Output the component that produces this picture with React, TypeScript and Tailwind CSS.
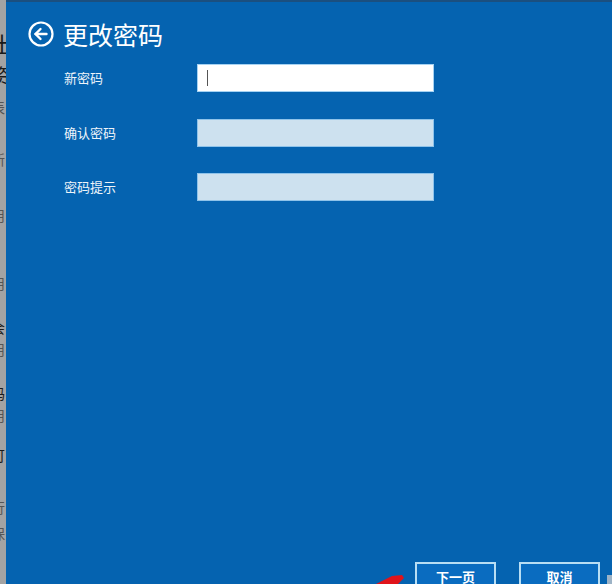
const cjk = { fontFamily: '"Noto Sans CJK SC", "Noto Sans", sans-serif' };

function BackIcon() {
  return (
    <svg width="28" height="28" viewBox="0 0 28 28" fill="none" stroke="white" strokeLinecap="round" strokeLinejoin="round">
      <circle cx="14" cy="14" r="11.5" strokeWidth="2.2" />
      <path d="M8.5 14H19.5" strokeWidth="2.4" />
      <path d="M13.5 9L8.5 14L13.5 19" strokeWidth="2.4" />
    </svg>
  );
}

const fields = [
  { label: '新密码', active: true },
  { label: '确认密码', active: false },
  { label: '密码提示', active: false },
];

export default function App() {
  return (
    <div className="relative flex h-[584px] w-[612px] overflow-hidden bg-[#a3a3a3]" style={cjk}>
      {/* window behind, mostly covered */}
      <div className="w-[6px] shrink-0 overflow-hidden">
        <div className="ml-[-9px] flex w-[20px] flex-col text-[#1a1a1a]">
          <span className="mt-[30px] text-[22px] leading-[26px]">士</span>
          <span className="mt-[8px] text-[20px] leading-[24px]">资</span>
          <span className="mt-[10px] text-[14px] leading-[18px] text-[#555]">表</span>
          <span className="mt-[10px] text-[14px] leading-[18px]">c</span>
          <span className="mt-[6px] text-[14px] leading-[18px] text-[#555]">新</span>
          <span className="mt-[14px] text-[14px] leading-[18px]">c</span>
          <span className="mt-[6px] text-[14px] leading-[18px] text-[#555]">用</span>
          <span className="mt-[26px] text-[14px] leading-[18px]">c</span>
          <span className="mt-[6px] text-[14px] leading-[18px] text-[#555]">用</span>
          <span className="mt-[26px] text-[14px] leading-[18px]">会</span>
          <span className="mt-[4px] text-[14px] leading-[18px] text-[#555]">用</span>
          <span className="mt-[26px] text-[14px] leading-[18px]">码</span>
          <span className="mt-[4px] text-[14px] leading-[18px] text-[#555]">用</span>
          <span className="mt-[22px] text-[14px] leading-[18px]">可</span>
          <span className="mt-[2px] text-[14px] leading-[18px]">c</span>
          <span className="mt-[14px] text-[14px] leading-[18px] text-[#555]">行</span>
          <span className="mt-[8px] text-[14px] leading-[18px] text-[#555]">保</span>
        </div>
      </div>

      <div className="flex flex-1 flex-col border-t-2 border-[#1b4f7f] bg-[#0563b0] pt-[17px]">
        <div className="flex h-[30px] items-center gap-[8px] pl-[21px]">
          <BackIcon />
          <h1 className="text-[25px] font-normal leading-[30px] text-white">更改密码</h1>
        </div>

        <div className="mt-[15px] flex flex-col gap-[26.5px]">
          {fields.map((f) => (
            <div key={f.label} className="flex h-[28px] items-center">
              <span className="w-[191px] shrink-0 pl-[58px] text-[13px] leading-[18px] text-[#eef4fa]">{f.label}</span>
              <div
                className={
                  f.active
                    ? 'flex h-[28px] w-[237px] items-center border border-[#a6d2f2] bg-white pl-[9px]'
                    : 'h-[28px] w-[237px] border border-[#8fc3ea] bg-[#cde1ef]'
                }
              >
                {f.active && <div className="h-[16px] w-[1px] bg-[#555]" />}
              </div>
            </div>
          ))}
        </div>

        <div className="mt-auto flex h-[22px] items-start justify-end gap-[23px] pr-[12px]">
          <button className="flex h-[34px] w-[81px] items-start justify-center border-2 border-[#b8def4] bg-[#0a6cc0] pt-[4px] text-[13px] font-bold leading-[18px] text-white">
            下一页
          </button>
          <button className="flex h-[34px] w-[81px] items-start justify-center border-2 border-[#b8def4] bg-[#0a6cc0] pt-[4px] text-[13px] font-bold leading-[18px] text-white">
            取消
          </button>
        </div>
      </div>

      {/* edge of a window to the right */}
      <div className="absolute right-0 top-[575px] h-[9px] w-[5px] bg-[#9db3c6]" />

      {/* red annotation arrow pointing at the next button */}
      <svg className="absolute left-[372px] top-[574px]" width="36" height="10" viewBox="0 0 36 10">
        <polygon points="4,10 14,5 20,2 30,1 32,4 26,10" fill="#e0141b" />
      </svg>
    </div>
  );
}
